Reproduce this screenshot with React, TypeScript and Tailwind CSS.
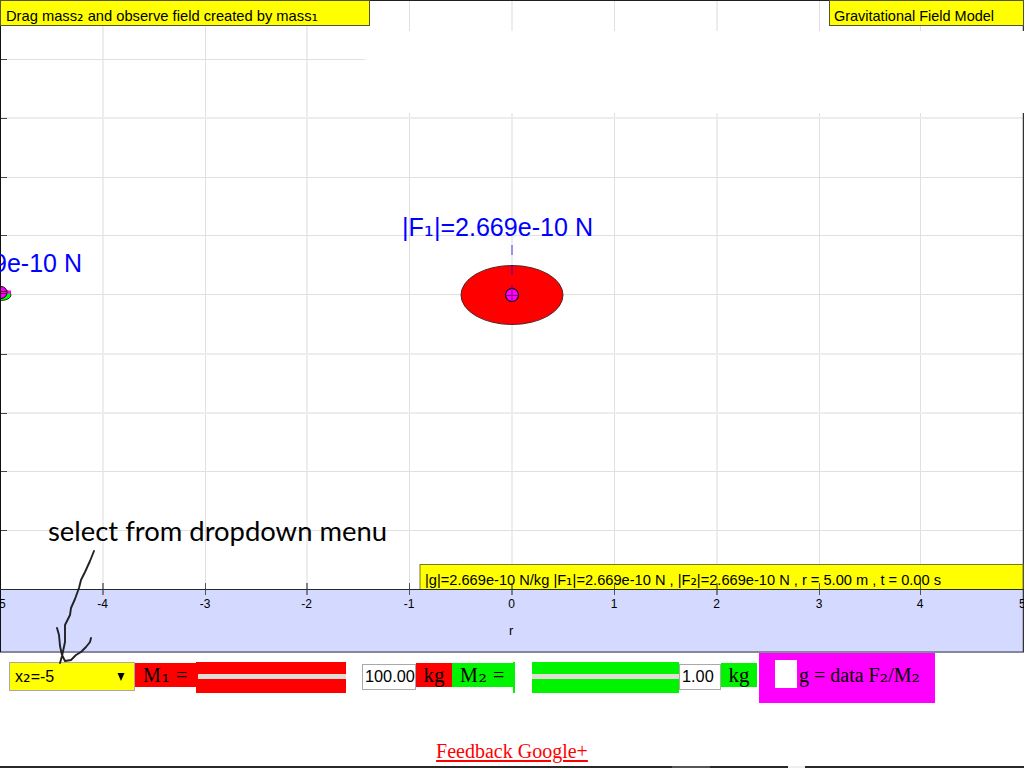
import React from "react";

const columns = [
  { x: 103, wide: true, label: "-4" },
  { x: 205.5, wide: false, label: "-3" },
  { x: 307, wide: true, label: "-2" },
  { x: 409.5, wide: false, label: "-1" },
  { x: 512, wide: true, label: "0" },
  { x: 614.5, wide: false, label: "1" },
  { x: 717, wide: true, label: "2" },
  { x: 819.5, wide: false, label: "3" },
  { x: 920.5, wide: false, label: "4" },
];
const rows = [59.5, 118, 177.5, 235.5, 294.5, 354, 413, 471.5, 530.5];

/** Subscript digit that rests on the baseline; `size` is its font size. */
function SvgSub({ children, size }: { children: string; size: number }) {
  return <tspan fontFamily="'DejaVu Sans', sans-serif" fontSize={size}>{children}</tspan>;
}

function Sub({ children }: { children: string }) {
  return <span className="font-['DejaVu_Serif',serif] text-[21px] leading-none">{children}</span>;
}

function Plot() {
  return (
    <svg width="1024" height="653" viewBox="0 0 1024 653" className="block shrink-0" fontFamily="'Liberation Sans', sans-serif">
      <rect width="1024" height="653" fill="#fff" />
      {columns.map((c) => (
        <path key={c.x} d={`M${c.x} 1V589`} stroke={c.wide ? "#ededed" : "#e0e0e0"} strokeWidth={c.wide ? 2 : 1} />
      ))}
      {rows.map((y) => (
        <path key={y} d={`M1 ${y}H1023`} stroke={y % 1 ? "#e0e0e0" : "#ededed"} strokeWidth={y % 1 ? 1 : 2} />
      ))}
      <rect x="365" y="31" width="659" height="82" fill="#fff" />
      <rect x="1" y="589" width="1022" height="63" fill="#d3d9ff" />
      <path d="M0 652H1024" stroke="#85879b" strokeWidth="2" />
      <path d="M0 .5H1024" stroke="#202020" />
      <path d="M.5 0V652" stroke="#111" />
      <path d="M1023.5 0V31M1023.5 113V652" stroke="#333" strokeWidth="1.5" />

      <rect x=".5" y=".5" width="369" height="25" fill="#ff0" stroke="#55552b" />
      <text x="6" y="21" fontSize="14.500" textLength="312" lengthAdjust="spacingAndGlyphs">
        Drag mass<SvgSub size={16}>₂</SvgSub> and observe field created by mass<SvgSub size={16}>₁</SvgSub>
      </text>
      <rect x="829.5" y=".5" width="194" height="25" fill="#ff0" stroke="#55552b" />
      <text x="834" y="21" fontSize="14.500" textLength="160" lengthAdjust="spacingAndGlyphs">Gravitational Field Model</text>
      <rect x="420" y="564.5" width="603" height="25" fill="#ff0" stroke="#77772b" />
      <text x="425" y="585" fontSize="14.500" textLength="516" lengthAdjust="spacingAndGlyphs">
        |g|=2.669e-10 N/kg |F<SvgSub size={16}>₁</SvgSub>|=2.669e-10 N , |F<SvgSub size={16}>₂</SvgSub>|=2.669e-10 N , r = 5.00 m , t = 0.00 s
      </text>
      <path d="M0 589.5H1024" stroke="#282828" />

      {rows.map((y) => (
        <path key={y} d={`M1 ${Math.floor(y) + 0.5}h6`} stroke="#444" />
      ))}
      {columns.map((c) => (
        <g key={c.x}>
          <path d={`M${c.x} 583v12`} stroke="#333" strokeWidth={c.wide ? 1.4 : 1} strokeOpacity=".8" />
          <text x={c.x - 0.5} y="608" fontSize="12" textAnchor="middle">{c.label}</text>
        </g>
      ))}
      <text x="-1" y="608" fontSize="12">5</text>
      <text x="1019" y="608" fontSize="12">5</text>
      <text x="509" y="635" fontSize="13">r</text>

      <ellipse cx="512" cy="295" rx="51" ry="29.5" fill="#f00" stroke="#5b2020" />
      <path d="M512 245v10M512 265v10M512 285v10" stroke="#00f" strokeOpacity=".38" strokeWidth="2" />
      <circle cx="512" cy="295" r="6.5" fill="#f0f" stroke="#180018" strokeWidth="1.2" />
      <path d="M505.500 295.500h13M512 288.500v13" stroke="#800080" />
      <text x="402" y="236" fontSize="25" fill="#00f" textLength="191" lengthAdjust="spacingAndGlyphs">
        |F<SvgSub size={25}>₁</SvgSub>|=2.669e-10 N
      </text>

      <ellipse cx="1" cy="295" rx="10" ry="5.500" fill="#0f0" stroke="#333" />
      <path d="M1 292h10" stroke="#f0f" strokeWidth="3" />
      <circle cx="1" cy="292.500" r="6" fill="#f0f" stroke="#180018" />
      <path d="M0 291.500h7M0 293.500h7" stroke="#800050" />
      <path d="M.5 280v28" stroke="#111" />
      <text x="82" y="272" fontSize="25" fill="#00f" textAnchor="end">9e-10 N</text>
    </svg>
  );
}

function Annotation() {
  return (
    <svg width="420" height="170" viewBox="0 510 420 170" className="pointer-events-none absolute left-0 top-[510px]">
      <text x="48" y="541" fontSize="27" fontFamily="Lato, sans-serif" textLength="339" lengthAdjust="spacingAndGlyphs">select from dropdown menu</text>
      <path
        d="M94 551L90 561L85 572L81 580L79 588L75 599L71 608L70 615L65 625V642L62 656L60 663M57 628L59 635L60 646L62 655L65 661L71 660L76 655L81 652L86 647L90 642L91 638"
        fill="none" stroke="#222" strokeWidth="1.900" strokeLinecap="round" strokeLinejoin="round"
      />
    </svg>
  );
}

export default function App() {
  return (
    <main className="relative flex h-[768px] w-[1024px] flex-col overflow-hidden bg-white text-black">
      <Plot />
      <div className="flex h-[50px] shrink-0 items-start pl-[9px] font-['Liberation_Serif',serif] text-[20px] leading-6">
        <button className="mt-[9px] flex h-[29px] w-[126px] items-center justify-between border border-[#a9a9a9] bg-[#ffff00] pl-[5px] pr-2 font-['Liberation_Sans',sans-serif] text-[16px]">
          <span>x<span className="font-['DejaVu_Sans',sans-serif] text-[19px] leading-none">₂</span>=-5</span>
          <svg width="10" height="8" viewBox="0 0 10 8"><path d="M1.500 0h7L5 8z" /></svg>
        </button>
        <span className="mt-[10px] h-6 w-[61px] whitespace-nowrap bg-[#ff0000] pl-2 tracking-[0.6px]">M<Sub>₁</Sub> =</span>
        <div className="mt-[9px] flex h-[31px] w-[150px] items-center bg-[#ff0000] pl-[2px]">
          <div className="-mt-[2px] h-[5px] w-full bg-[#e2dcd7]" />
        </div>
        <input readOnly value="100.00" className="ml-4 mt-[11px] h-[26px] w-[54px] border border-[#a9a9a9] bg-white pb-[2px] pl-[2px] font-['Liberation_Sans',sans-serif] text-[16.300px] outline-none" />
        <span className="mt-[10px] h-6 w-9 bg-[#ff0000] text-center text-[21px]">kg</span>
        <span className="mt-[10px] h-6 w-[61px] whitespace-nowrap bg-[#00f400] pl-2 tracking-[0.6px]">M<Sub>₂</Sub> =</span>
        <div className="mt-[9px] h-[31px] w-[2px] bg-[#00f400]" />
        <div className="ml-[17px] mt-[9px] flex h-[31px] w-[147px] items-center bg-[#00f400]">
          <div className="-mt-[2px] h-[5px] w-full bg-[#e2dcd7]" />
        </div>
        <input readOnly value="1.00" className="mt-[11px] h-[26px] w-[42px] border border-[#a9a9a9] bg-white pb-[2px] pl-[2px] font-['Liberation_Sans',sans-serif] text-[16.300px] outline-none" />
        <span className="mt-[10px] h-6 w-9 bg-[#00f400] text-center text-[21px]">kg</span>
        <label className="ml-[2px] flex h-[50px] w-[176px] items-start whitespace-nowrap bg-[#ff00ff] pl-4">
          <span className="mt-[7px] h-7 w-[22px] shrink-0 bg-white" />
          <span className="ml-[2px] mt-[10px]">g = data F<Sub>₂</Sub>/M<Sub>₂</Sub></span>
        </label>
      </div>
      <a href="#feedback" className="mt-[36px] self-center font-['Liberation_Serif',serif] text-[20px] leading-6 text-[#ff0000] underline decoration-2 underline-offset-2">Feedback Google+</a>
      <div className="mt-auto flex h-[2px] w-full shrink-0 bg-[#282828]">
        <div className="ml-[672px] w-[38px] bg-[#555555]" />
        <div className="ml-[78px] w-[17px] bg-[#eeeeee]" />
      </div>
      <Annotation />
    </main>
  );
}
